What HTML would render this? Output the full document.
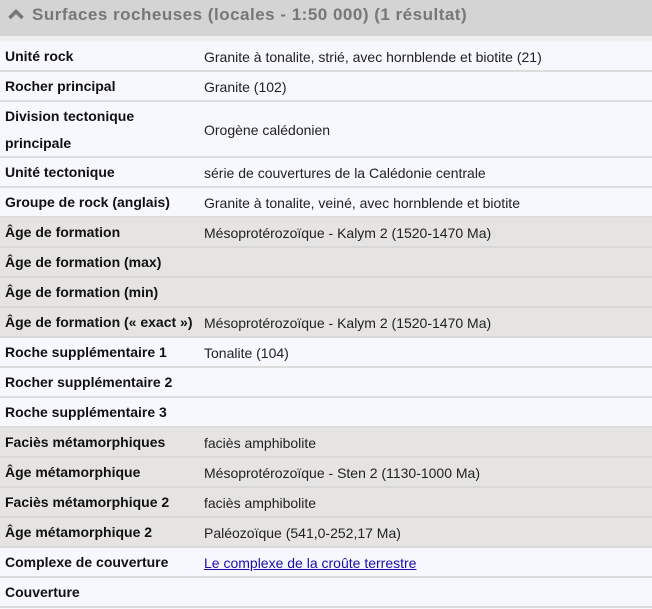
<!DOCTYPE html>
<html><head><meta charset="utf-8"><style>
body{margin:0;width:652px;height:609px;overflow:hidden;background:#f7f8fd;font-family:"Liberation Sans",Arial,sans-serif;font-size:14px;color:#111}
.hd{height:36px;background:#d4d4d4;color:#777;font-weight:bold;font-size:17px;line-height:30px;padding-left:6px;letter-spacing:0.5px;position:relative}
.hd svg{position:absolute;left:7px;top:7px}
.hd span{margin-left:26px}
.gap{height:6px;background:#f0f0f0}
.r{display:flex;height:28px;border-bottom:2px solid #dcdcdc;align-items:center;background:#f7f8fd}
.r.g{background:#e5e4e2;border-bottom-color:#d8d8d8}
.l{width:190px;padding-left:5px;margin-right:9px;font-weight:bold;line-height:27px;padding-top:1px}
.v{color:#222;padding-top:1px}
a{color:#1a0dab;text-decoration:underline}
</style></head><body>
<div class="hd"><svg width="18" height="14" viewBox="0 0 18 14"><path d="M2.5 11 L9 4.5 L15.5 11" stroke="#777" stroke-width="3.5" fill="none"/></svg><span>Surfaces rocheuses (locales - 1:50 000) (1 résultat)</span></div>
<div class="gap"></div>
<div class="r"><div class="l">Unité rock</div><div class="v">Granite à tonalite, strié, avec hornblende et biotite (21)</div></div>
<div class="r"><div class="l">Rocher principal</div><div class="v">Granite (102)</div></div>
<div class="r" style="height:54px"><div class="l">Division tectonique principale</div><div class="v">Orogène calédonien</div></div>
<div class="r"><div class="l">Unité tectonique</div><div class="v">série de couvertures de la Calédonie centrale</div></div>
<div class="r"><div class="l">Groupe de rock (anglais)</div><div class="v">Granite à tonalite, veiné, avec hornblende et biotite</div></div>
<div class="r g"><div class="l">Âge de formation</div><div class="v">Mésoprotérozoïque - Kalym 2 (1520-1470 Ma)</div></div>
<div class="r g"><div class="l">Âge de formation (max)</div><div class="v"></div></div>
<div class="r g"><div class="l">Âge de formation (min)</div><div class="v"></div></div>
<div class="r g"><div class="l" style="white-space:nowrap">Âge de formation (« exact »)</div><div class="v">Mésoprotérozoïque - Kalym 2 (1520-1470 Ma)</div></div>
<div class="r"><div class="l">Roche supplémentaire 1</div><div class="v">Tonalite (104)</div></div>
<div class="r"><div class="l">Rocher supplémentaire 2</div><div class="v"></div></div>
<div class="r"><div class="l">Roche supplémentaire 3</div><div class="v"></div></div>
<div class="r g"><div class="l">Faciès métamorphiques</div><div class="v">faciès amphibolite</div></div>
<div class="r g"><div class="l">Âge métamorphique</div><div class="v">Mésoprotérozoïque - Sten 2 (1130-1000 Ma)</div></div>
<div class="r g"><div class="l">Faciès métamorphique 2</div><div class="v">faciès amphibolite</div></div>
<div class="r g"><div class="l">Âge métamorphique 2</div><div class="v">Paléozoïque (541,0-252,17 Ma)</div></div>
<div class="r"><div class="l">Complexe de couverture</div><div class="v"><a>Le complexe de la croûte terrestre</a></div></div>
<div class="r"><div class="l">Couverture</div><div class="v"></div></div>
</body></html>
